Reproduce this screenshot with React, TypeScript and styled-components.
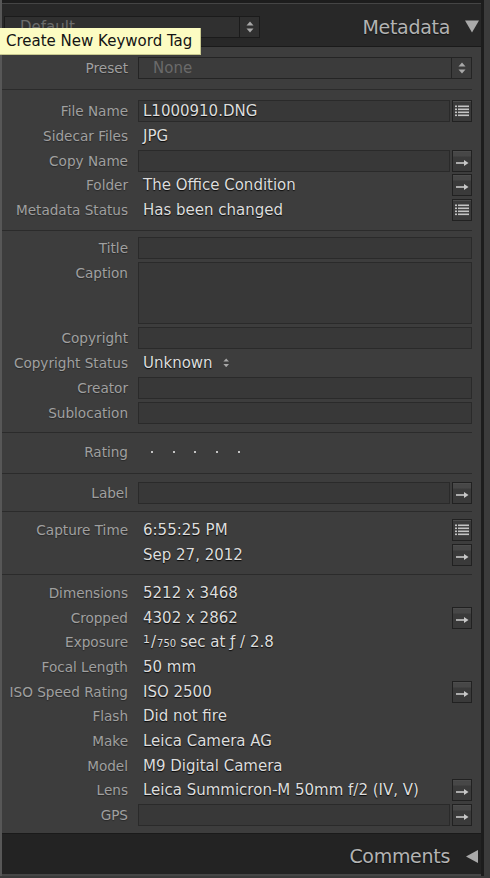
import styled, { createGlobalStyle } from "styled-components"

const GlobalStyle = createGlobalStyle`
  html, body {
    margin: 0;
    padding: 0;
    background: #3b3b3b;
  }
  body {
    font-family: "DejaVu Sans", "Liberation Sans", sans-serif;
  }
  * {
    box-sizing: border-box;
  }
`

const ListIcon = () => (
    <svg width="14" height="12" viewBox="0 0 14 12">
        {[0, 1, 2, 3].map(i => (
            <g key={i} fill="#c4c4c4">
                <rect x="0" y={i * 3 + 0.5} width="2" height="1.6" />
                <rect x="3" y={i * 3 + 0.5} width="11" height="1.6" />
            </g>
        ))}
    </svg>
)

const ArrowIcon = () => (
    <svg width="14" height="8" viewBox="0 0 14 8">
        <path d="M1 4 H10" stroke="#c8c8c8" strokeWidth="1.6" />
        <polygon points="9,1 13.5,4 9,7" fill="#c8c8c8" />
    </svg>
)

const Spinner = ({ size = 1 }: { size?: number }) => (
    <svg width={8 * size} height={12 * size} viewBox="0 0 8 12">
        <polygon points="4,0.5 7.5,4.5 0.5,4.5" fill="#a8a8a8" />
        <polygon points="0.5,7.5 7.5,7.5 4,11.5" fill="#a8a8a8" />
    </svg>
)

const Triangle = ({ dir }: { dir: "down" | "left" }) => (
    <svg width="14" height="13" viewBox="0 0 14 13">
        {dir === "down" ? (
            <polygon points="0,0.5 14,0.5 7,12.5" fill="#a9a9a9" />
        ) : (
            <polygon points="13,0 13,13 1,6.5" fill="#a9a9a9" />
        )}
    </svg>
)

type ButtonKind = "list" | "arrow"

const Btn = ({ kind }: { kind: ButtonKind }) => (
    <Button $kind={kind}>{kind === "list" ? <ListIcon /> : <ArrowIcon />}</Button>
)

const App = () => {
    return (
        <>
            <GlobalStyle />
            <Frame>
                <TopStrip />
                <Header>
                    <Dropdown>
                        <DropText>Default</DropText>
                        <DropSpin>
                            <Spinner />
                        </DropSpin>
                    </Dropdown>
                    <HeadTitle>
                        Metadata
                        <Triangle dir="down" />
                    </HeadTitle>
                </Header>
                <Tooltip>Create New Keyword Tag</Tooltip>

                <Panel>
                    <Section $pt={10} $pb={10} $gap={0} $first>
                        <Row>
                            <Label>Preset</Label>
                            <Select>
                                <SelectText>None</SelectText>
                                <SelectSpin>
                                    <Spinner />
                                </SelectSpin>
                            </Select>
                        </Row>
                    </Section>

                    <Section $pt={10} $pb={9} $gap={2.75}>
                        <Row>
                            <Label>File Name</Label>
                            <Line>
                                <Field>L1000910.DNG</Field>
                                <Btn kind="list" />
                            </Line>
                        </Row>
                        <Row>
                            <Label>Sidecar Files</Label>
                            <Value>JPG</Value>
                        </Row>
                        <Row>
                            <Label>Copy Name</Label>
                            <Line>
                                <Field />
                                <Btn kind="arrow" />
                            </Line>
                        </Row>
                        <Row>
                            <Label>Folder</Label>
                            <Line>
                                <Value>The Office Condition</Value>
                                <Btn kind="arrow" />
                            </Line>
                        </Row>
                        <Row>
                            <Label>Metadata Status</Label>
                            <Line>
                                <Value>Has been changed</Value>
                                <Btn kind="list" />
                            </Line>
                        </Row>
                    </Section>

                    <Section $pt={5.5} $pb={8.5} $gap={3}>
                        <Row>
                            <Label>Title</Label>
                            <Field />
                        </Row>
                        <Row $start>
                            <Label>Caption</Label>
                            <Field $h={62} />
                        </Row>
                        <Row>
                            <Label>Copyright</Label>
                            <Field />
                        </Row>
                        <Row>
                            <Label>Copyright Status</Label>
                            <Value>
                                Unknown
                                <StatusSpin>
                                    <Spinner size={0.8} />
                                </StatusSpin>
                            </Value>
                        </Row>
                        <Row>
                            <Label>Creator</Label>
                            <Field />
                        </Row>
                        <Row>
                            <Label>Sublocation</Label>
                            <Field />
                        </Row>
                    </Section>

                    <Section $pt={8} $pb={10} $gap={0}>
                        <Row>
                            <Label>Rating</Label>
                            <Dots>
                                {[0, 1, 2, 3, 4].map(i => (
                                    <Dot key={i} />
                                ))}
                            </Dots>
                        </Row>
                    </Section>

                    <Section $pt={7.7} $pb={7.3} $gap={0}>
                        <Row>
                            <Label>Label</Label>
                            <Line>
                                <Field />
                                <Btn kind="arrow" />
                            </Line>
                        </Row>
                    </Section>

                    <Section $pt={7} $pb={8} $gap={3}>
                        <Row>
                            <Label>Capture Time</Label>
                            <Line>
                                <Value>6:55:25 PM</Value>
                                <Btn kind="list" />
                            </Line>
                        </Row>
                        <Row>
                            <Label />
                            <Line>
                                <Value>Sep 27, 2012</Value>
                                <Btn kind="arrow" />
                            </Line>
                        </Row>
                    </Section>

                    <Section $pt={7} $pb={7} $gap={2.67}>
                        <Row>
                            <Label>Dimensions</Label>
                            <Value>5212 x 3468</Value>
                        </Row>
                        <Row>
                            <Label>Cropped</Label>
                            <Line>
                                <Value>4302 x 2862</Value>
                                <Btn kind="arrow" />
                            </Line>
                        </Row>
                        <Row>
                            <Label>Exposure</Label>
                            <Value>
                                <Sup>1</Sup>/<Sub>750</Sub> sec at ƒ / 2.8
                            </Value>
                        </Row>
                        <Row>
                            <Label>Focal Length</Label>
                            <Value>50 mm</Value>
                        </Row>
                        <Row>
                            <Label>ISO Speed Rating</Label>
                            <Line>
                                <Value>ISO 2500</Value>
                                <Btn kind="arrow" />
                            </Line>
                        </Row>
                        <Row>
                            <Label>Flash</Label>
                            <Value>Did not fire</Value>
                        </Row>
                        <Row>
                            <Label>Make</Label>
                            <Value>Leica Camera AG</Value>
                        </Row>
                        <Row>
                            <Label>Model</Label>
                            <Value>M9 Digital Camera</Value>
                        </Row>
                        <Row>
                            <Label>Lens</Label>
                            <Line>
                                <Value>Leica Summicron-M 50mm f/2 (IV, V)</Value>
                                <Btn kind="arrow" />
                            </Line>
                        </Row>
                        <Row>
                            <Label>GPS</Label>
                            <Line>
                                <Field />
                                <Btn kind="arrow" />
                            </Line>
                        </Row>
                    </Section>
                </Panel>

                <Footer>
                    <HeadTitle>
                        Comments
                        <Triangle dir="left" />
                    </HeadTitle>
                </Footer>
            </Frame>
        </>
    )
}

export default App

const Frame = styled.div`
    position: relative;
    width: 484px;
    border-left: 2px solid #575757;
    border-right: 3px solid #1c1c1c;
    background: #232323;
`

const TopStrip = styled.div`
    height: 4px;
    background: #1d1d1d;
    border-bottom: 1px solid #454545;
`

const Header = styled.div`
    height: 42px;
    display: flex;
    align-items: center;
    justify-content: space-between;
    padding: 3px 2px 0 2px;
    background: #282828;
`

const Dropdown = styled.div`
    width: 256px;
    height: 22px;
    display: flex;
    background: #303030;
    border: 1px solid #1b1b1b;
`

const DropText = styled.div`
    flex: 1;
    padding-left: 15px;
    font-size: 15px;
    line-height: 20px;
    color: #6c6c6c;
`

const DropSpin = styled.div`
    width: 20px;
    display: flex;
    align-items: center;
    justify-content: center;
    border-left: 1px solid #1b1b1b;
`

const HeadTitle = styled.div`
    display: flex;
    align-items: center;
    gap: 15px;
    font-size: 19px;
    letter-spacing: -0.3px;
    color: #b3b3b3;
    text-shadow: 0 1px 1px rgba(0, 0, 0, 0.6);
`

const Tooltip = styled.div`
    position: absolute;
    left: -2px;
    top: 28px;
    width: 201px;
    height: 27px;
    padding-left: 6px;
    background: #fcfcc2;
    border-right: 1px solid #c9c98f;
    border-bottom: 1px solid #c9c98f;
    font-size: 15px;
    line-height: 26px;
    color: #141414;
    white-space: nowrap;
    z-index: 2;
`

const Panel = styled.div`
    background: #3d3d3d;
    border-top: 1px solid #1a1a1a;
    border-bottom: 1px solid #1a1a1a;
    padding-right: 9px;
`

const Section = styled.div<{ $pt: number; $pb: number; $gap: number; $first?: boolean }>`
    display: flex;
    flex-direction: column;
    gap: ${p => p.$gap}px;
    padding-top: ${p => p.$pt}px;
    padding-bottom: ${p => p.$pb}px;
    border-top: ${p => (p.$first ? "none" : "1px solid #2b2b2b")};
`

const Row = styled.div<{ $start?: boolean }>`
    display: grid;
    grid-template-columns: 126px 1fr;
    column-gap: 10px;
    align-items: ${p => (p.$start ? "start" : "center")};
    min-height: 22px;
`

const Label = styled.div`
    text-align: right;
    font-size: 13.6px;
    line-height: 22px;
    color: #a0a0a0;
    white-space: nowrap;
    text-shadow: 0 1px 1px rgba(0, 0, 0, 0.35);
`

const Value = styled.div`
    flex: 1;
    display: flex;
    align-items: center;
    padding-left: 5px;
    font-size: 15px;
    line-height: 22px;
    color: #dddddd;
    white-space: nowrap;
    text-shadow: 0 1px 1px rgba(0, 0, 0, 0.85);
`

const Line = styled.div`
    display: flex;
    align-items: center;
    gap: 2px;
`

const Field = styled.div<{ $h?: number }>`
    flex: 1;
    height: ${p => p.$h ?? 22}px;
    padding-left: 4px;
    background: #383838;
    border: 1px solid #2a2a2a;
    font-size: 15px;
    line-height: 20px;
    color: #dddddd;
    text-shadow: 0 1px 1px rgba(0, 0, 0, 0.85);
`

const Button = styled.div<{ $kind: ButtonKind }>`
    width: 20px;
    height: 22px;
    display: flex;
    justify-content: center;
    align-items: ${p => (p.$kind === "list" ? "center" : "flex-end")};
    padding-bottom: ${p => (p.$kind === "list" ? 0 : 4)}px;
    border: 1px solid #212121;
    background: ${p =>
        p.$kind === "list"
            ? "#3a3a3a"
            : "linear-gradient(#474747 0, #474747 5px, #3a3a3a 6px, #3a3a3a 100%)"};
    box-shadow: inset 0 1px 0 #4d4d4d;
`

const Select = styled.div`
    height: 22px;
    display: flex;
    background: #3b3b3b;
    border: 1px solid #242424;
`

const SelectText = styled.div`
    flex: 1;
    padding-left: 14px;
    font-size: 15px;
    line-height: 20px;
    color: #6a6a6a;
`

const SelectSpin = styled.div`
    width: 20px;
    display: flex;
    align-items: center;
    justify-content: center;
    border-left: 1px solid #242424;
`

const StatusSpin = styled.span`
    display: inline-flex;
    margin-left: 10px;
`

const Dots = styled.div`
    display: flex;
    gap: 19.7px;
    padding-left: 13px;
    height: 22px;
    align-items: center;
`

const Dot = styled.span`
    width: 2px;
    height: 2px;
    background: #c4c4c4;
`

const Sup = styled.span`
    font-size: 11px;
    align-self: flex-start;
    line-height: 17px;
    margin-right: 1px;
`

const Sub = styled.span`
    font-size: 10px;
    align-self: flex-end;
    line-height: 18px;
    margin-left: 1px;
    margin-right: 4px;
`

const Footer = styled.div`
    height: 42px;
    display: flex;
    align-items: center;
    justify-content: flex-end;
    padding: 5px 2px 0 0;
    background: #232323;
    border-bottom: 2px solid #464646;
`
